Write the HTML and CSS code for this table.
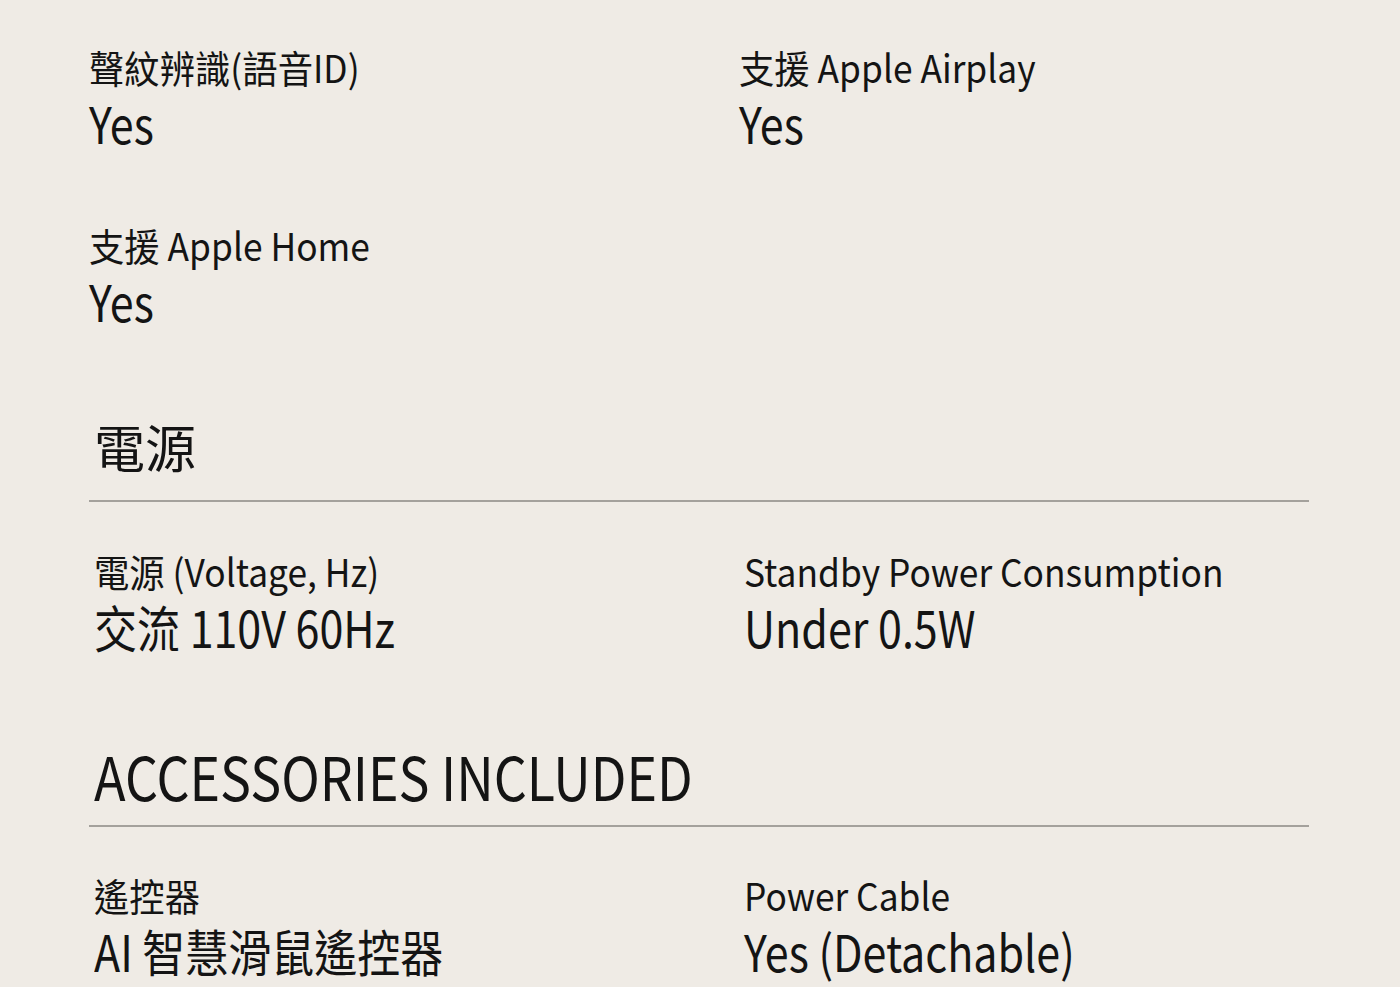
FILE: index.html
```html
<!DOCTYPE html>
<html lang="zh-Hant">
<head>
<meta charset="utf-8">
<title>規格</title>
<link rel="stylesheet" href="styles.css">
</head>
<body>
<main class="sheet">
  <section class="specs specs--top">
    <div class="spec">
      <div class="spec-label">聲紋辨識(語音ID)</div>
      <div class="spec-value">Yes</div>
    </div>
    <div class="spec">
      <div class="spec-label">支援 Apple Airplay</div>
      <div class="spec-value">Yes</div>
    </div>
    <div class="spec">
      <div class="spec-label">支援 Apple Home</div>
      <div class="spec-value">Yes</div>
    </div>
  </section>

  <section class="group group--power">
    <h2 class="group-title">電源</h2>
    <div class="specs specs--inset">
      <div class="spec">
        <div class="spec-label">電源 (Voltage, Hz)</div>
        <div class="spec-value">交流 110V 60Hz</div>
      </div>
      <div class="spec">
        <div class="spec-label">Standby Power Consumption</div>
        <div class="spec-value">Under 0.5W</div>
      </div>
    </div>
  </section>

  <section class="group group--accessories">
    <h2 class="group-title group-title--latin"><span class="group-title-text">ACCESSORIES INCLUDED</span></h2>
    <div class="specs specs--inset">
      <div class="spec">
        <div class="spec-label">遙控器</div>
        <div class="spec-value">AI 智慧滑鼠遙控器</div>
      </div>
      <div class="spec">
        <div class="spec-label">Power Cable</div>
        <div class="spec-value">Yes (Detachable)</div>
      </div>
    </div>
  </section>
</main>
</body>
</html>
```
FILE: styles.css
```css
html, body {
  margin: 0;
  padding: 0;
}

body {
  background: #efebe5;
  color: #141414;
  font-family: "Noto Sans CJK TC", "Noto Sans", sans-serif;
  height: 987px;
  overflow: hidden;
}

.sheet {
  width: 1220px;
  padding: 45px 0 0 89px;
}

.specs {
  display: grid;
  grid-template-columns: 650px 1fr;
  row-gap: 71px;
}

.specs--inset {
  padding-left: 5px;
}

.spec-label {
  font-size: 38px;
  line-height: 44px;
  white-space: nowrap;
  transform: scaleX(0.93);
  transform-origin: 0 0;
}

.spec-value {
  margin-top: 3px;
  font-size: 50px;
  line-height: 60px;
  white-space: nowrap;
  transform: scaleX(0.86);
  transform-origin: 0 0;
}

.group-title {
  margin: 0;
  font-weight: 400;
  border-bottom: 2px solid #a4a19c;
  padding-left: 5px;
}

.group--power {
  margin-top: 86px;
}

.group--power .group-title {
  font-size: 51px;
  line-height: 60px;
  padding-bottom: 24px;
}

.group--power .specs {
  margin-top: 47px;
}

.group--accessories {
  margin-top: 84px;
}

.group-title--latin {
  font-size: 60px;
  line-height: 70px;
  padding-bottom: 15px;
}

.group-title-text {
  display: inline-block;
  transform: scaleX(0.865);
  transform-origin: 0 0;
}

.group--accessories .specs {
  margin-top: 46px;
}
```
